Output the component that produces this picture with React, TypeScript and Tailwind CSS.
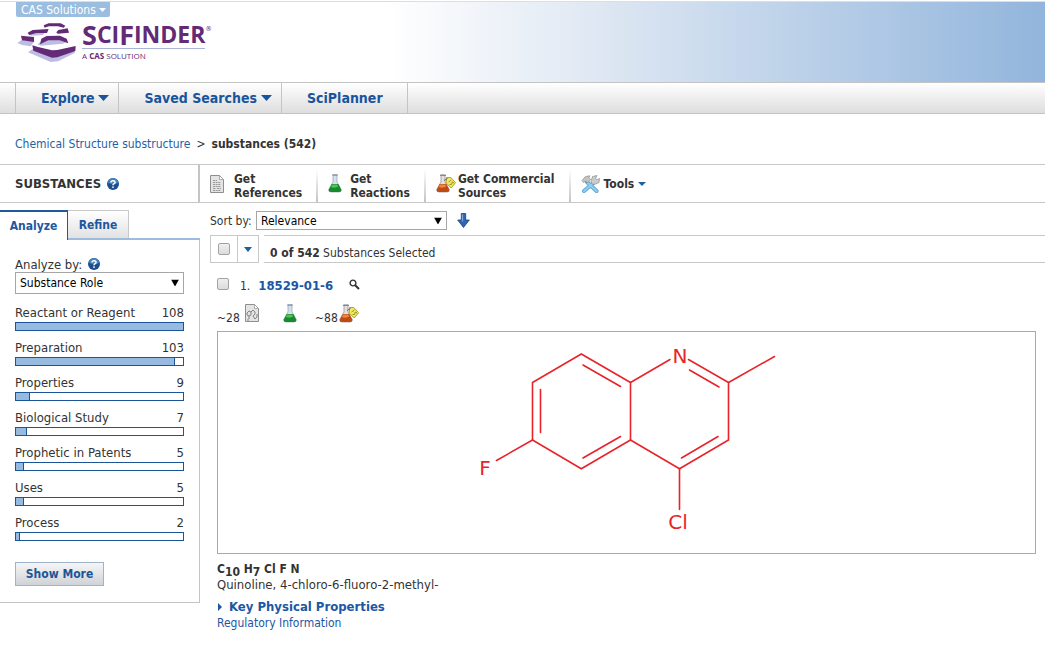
import { ReactNode } from 'react';

const roles = [
  { label: 'Reactant or Reagent', count: 108 },
  { label: 'Preparation', count: 103 },
  { label: 'Properties', count: 9 },
  { label: 'Biological Study', count: 7 },
  { label: 'Prophetic in Patents', count: 5 },
  { label: 'Uses', count: 5 },
  { label: 'Process', count: 2 },
];

const maxCount = 108;

function Caret({ className = '' }: { className?: string }) {
  return (
    <svg viewBox="0 0 10 6" preserveAspectRatio="none" className={`shrink-0 fill-current ${className}`} aria-hidden="true">
      <path d="M0 0h10L5 6z" />
    </svg>
  );
}

function Logo() {
  return (
    <svg viewBox="18 18 186 126" className="h-[42px] w-[62px] shrink-0" aria-hidden="true">
      <g fill="#bdbde4">
        <path d="M22 84l14-10 36 6-10 14-26-4zM52 56l10-6 44 2-8 8-34 2zM82 88l10-8 22-6h36l18 8-10 4-66 6zM54 112l14-10 58 22 68-18v8l-50 25-22 2z" />
      </g>
      <g fill="#632a76">
        <path d="M101 31l15-6h36l14 7-5 6-17-4h-28l-12 4z" />
        <path d="M53 53l15-8 48-3-5 12-32 0-21 6z" />
        <path d="M139 52l6-7 28-5 4 13-34 3z" />
        <path d="M33 62l39 4v15l-36-5z" />
        <path d="M90 88l4-17 16-8 40-1 20 9 5 14-26-9h-34z" />
        <path d="M67 91l17 5 42 10 16-1 55-12-1 15-54 19-16 1-56-21z" />
      </g>
    </svg>
  );
}

function HelpIcon() {
  return (
    <svg viewBox="0 0 12 12" className="size-3 shrink-0" aria-hidden="true">
      <circle cx="6" cy="6" r="6" fill="#1d4f8f" />
      <path d="M1 5a5 5 0 0 1 10 0Q6 7 1 5z" fill="#4a83bd" />
      <path d="M4 4.6Q4 2.7 6 2.7t2 1.7Q8 5.400 6.800 5.900 6 6.300 6 7.200" fill="none" stroke="#fff" strokeWidth="1.500" />
      <circle cx="6" cy="9.100" r=".9" fill="#fff" />
    </svg>
  );
}

function DocumentIcon({ structure = false }: { structure?: boolean }) {
  return (
    <svg viewBox="0 0 14 18" className="h-[18px] w-3.5 shrink-0" aria-hidden="true">
      <path d="M.5.5h9l4 4v13H.5z" fill="#e4e4e4" stroke="#8f8f8f" />
      <path d="M9.500.5v4h4z" fill="#fff" stroke="#999" strokeWidth=".8" />
      {structure ? (
        <g fill="none" stroke="#777" strokeWidth=".9">
          <path d="M2 9l2-2 2 1v3l-2 1-2-1zM6 8l2-2 2 2v2l-2 2M4 12v3M8 12l2 3 2-2v-3M2 16h2" />
        </g>
      ) : (
        <path d="M3 5.500h4M3 7.500h8M3 9.500h8M3 11.500h8M3 13.500h3M7 13.500h4M3 15.500h8" stroke="#9a9a9a" strokeDasharray="2 .6" />
      )}
    </svg>
  );
}

function FlaskIcon() {
  return (
    <svg viewBox="0 0 14 19" className="h-[19px] w-3.5 shrink-0" aria-hidden="true">
      <path d="M5 1v7L.8 15.500Q.3 18 3 18h8q2.700 0 2.200-2.500L9 8V1z" fill="#d5e2ec" stroke="#8ba1b3" strokeWidth=".7" />
      <path d="M4.200 1h5.600" stroke="#7d93a6" strokeWidth="1.300" />
      <path d="M3.700 10h6.600l2.900 5.500Q13.500 18 11 18H3Q.4 18 .8 15.500z" fill="#168a2c" />
      <path d="M4.200 10.500h5l1 2q-3 2-7.500.5z" fill="#4fc25d" />
    </svg>
  );
}

function SourceIcon() {
  return (
    <svg viewBox="0 0 20 19" className="h-[19px] w-5 shrink-0" aria-hidden="true">
      <path d="M5 1v7L.8 15.500Q.3 18 3 18h8q2.700 0 2.200-2.500L9 8V1z" fill="#e4e0e0" stroke="#8d8790" strokeWidth=".7" />
      <path d="M4 1.300h6" stroke="#7f8890" strokeWidth="1.300" />
      <path d="M3.700 10h6.600l2.900 5.500Q13.500 18 11 18H3Q.4 18 .8 15.500z" fill="#c14a12" />
      <path d="M4.200 10.500h5l1 2q-3 2-7.500.5z" fill="#ec8740" />
      <path d="M10.500 3.500l4.500.2 4.500 5-4.300 5.300-5-5z" fill="#f3ec62" stroke="#a39a20" strokeWidth=".9" />
      <path d="M12.500 8l3-2M13.500 10.500q3 .5 2.500-1.500t2 0" fill="none" stroke="#7d7620" strokeWidth=".8" />
      <path d="M8 6.500l3.500-2" stroke="#555" strokeWidth=".8" />
    </svg>
  );
}

function ToolsIcon() {
  return (
    <svg viewBox="0 0 19 18" className="h-[18px] w-[19px] shrink-0" aria-hidden="true">
      <path d="M6 7l9.500 9M12.500 8L3 16" stroke="#5aa9d8" strokeWidth="4" strokeLinecap="round" />
      <path d="M12.500 8L3 16M7 8l8.500 8" stroke="#8fd0f0" strokeWidth="2.200" strokeLinecap="round" />
      <path d="M1 5.500L4.500 1.500 9 .8 8 2.500l1.500 2L6.500 8 4.800 6 2.500 7.500z" fill="#c4c4c4" stroke="#8c8c8c" strokeWidth=".7" />
      <path d="M10 6.500L11.500 1.500l4.500-1-1.500 3 1.500 1.200 2.500-1.200-.5 4-3.500 1.500-3 .5z" fill="#cbcbcb" stroke="#8c8c8c" strokeWidth=".7" />
    </svg>
  );
}

function SortArrowIcon() {
  return (
    <svg viewBox="0 0 13 15" className="h-[15px] w-[13px]" aria-hidden="true">
      <path d="M4.300.5h4.400V7h3.600L6.500 14.500.7 7h3.600z" fill="#2f66b4" stroke="#173f80" strokeWidth=".8" />
      <path d="M5.500 1.500v7" stroke="#7fa8de" strokeWidth="1.200" />
    </svg>
  );
}

function SearchIcon() {
  return (
    <svg viewBox="0 0 11 11" className="size-[11px]" fill="none" stroke="#333" aria-hidden="true">
      <circle cx="4" cy="4" r="2.900" strokeWidth="1.400" />
      <path d="M6.200 6.200l3.800 3.800" strokeWidth="2" />
    </svg>
  );
}

/**
 * 4-chloro-6-fluoro-2-methylquinoline
 */
function Structure() {
  return (
    <svg viewBox="460 335 330 215" className="h-[215px] w-[330px]" role="img" aria-label="Quinoline, 4-chloro-6-fluoro-2-methyl-">
      <g fill="none" stroke="#e8242a" strokeWidth="1.600" strokeLinecap="round">
        <path d="M630.500 382.500L581.300 354l-48.800 28.500V440l48.800 28.700 49.200-28.700z" />
        <path d="M583 365l37.500 21.500M540.500 389.500v43M583 458l37.500-21.500" />
        <path d="M630.500 382.500l39.500-23M688.500 359.500l40 23V440l-49 28.700L630.500 440" />
        <path d="M689.500 370l29.500 17M718 436.500L681.500 458" />
        <path d="M728.500 382.500l46-26M679.500 468.700V509.500M532.500 440L496.500 460.500" />
      </g>
      <g fill="#e8242a" fontSize="20" textAnchor="middle" className="font-['DejaVu_Sans',sans-serif]">
        <text x="680" y="363">N</text>
        <text x="485" y="475">F</text>
        <text x="678" y="529">Cl</text>
      </g>
    </svg>
  );
}

function Select({ id, value, className = '' }: { id: string; value: string; className?: string }) {
  return (
    <div className={`relative ${className}`}>
      <select id={id} className="block h-full w-full appearance-none border border-[#a6a6a6] bg-white pl-1 text-xs text-black">
        <option>{value}</option>
      </select>
      <Caret className="pointer-events-none absolute top-1/2 right-[5px] h-[7px] w-2 -translate-y-1/2 text-black" />
    </div>
  );
}

function Checkbox({ label }: { label: string }) {
  return (
    <input
      type="checkbox"
      aria-label={label}
      className="size-3 shrink-0 appearance-none rounded-xs border border-[#a3a3a3] bg-linear-to-b from-[#efefef] to-[#dcdcdc]"
    />
  );
}

function NavItem({ children, caret = false }: { children: ReactNode; caret?: boolean }) {
  return (
    <button className={`flex h-full items-center gap-1 border-r border-[#c4c4c4] pl-[25px] ${caret ? 'pr-[9px]' : 'pr-6'}`}>
      {children}
      {caret && <Caret className="h-1.5 w-[11px]" />}
    </button>
  );
}

function ToolbarButton({ icon, children, className = '' }: { icon: ReactNode; children: ReactNode; className?: string }) {
  return (
    <button className={`flex items-center pl-2.5 text-left text-xs leading-[14px] font-bold ${className}`}>
      {icon}
      {children}
    </button>
  );
}

function Separator() {
  return <div className="mt-1 w-0.5 self-stretch bg-linear-to-b from-white to-[#c4c4c4]" />;
}

function Sidebar() {
  return (
    <aside className="w-[200px] shrink-0 pt-[7px]">
      <div className="flex h-[30px] text-xs font-bold text-[#1f57a0]" role="tablist">
        <button role="tab" aria-selected="true" className="w-[68px] border-t-2 border-r border-[#1f5a9d]">
          Analyze
        </button>
        <div className="flex grow border-b-2 border-[#9bbbdf]">
          <button role="tab" aria-selected="false" className="w-[61px] border-t border-r border-[#c8c8c8] bg-linear-to-b from-white to-[#e2e2e2]">
            Refine
          </button>
        </div>
      </div>
      <div className="border-r border-b border-[#c4c4c4] px-[15px] pt-4 pb-4">
        <div className="flex h-4 items-center gap-1.5 text-[13px]">
          <label htmlFor="analyze-by" className="pt-0.5">Analyze by:</label>
          <HelpIcon />
        </div>
        <Select id="analyze-by" value="Substance Role" className="h-[22px]" />
        <ul className="mt-[11px]">
          {roles.map((role) => (
            <li key={role.label} className="h-[35px] text-[13px] leading-4">
              <div className="flex justify-between">
                <span>{role.label}</span>
                <span>{role.count}</span>
              </div>
              <div className="mt-px h-[9px] border border-[#1c5597]">
                <div
                  className={`h-full bg-[#97bae0] ${role.count < maxCount ? 'border-r border-[#1c5597]' : ''}`}
                  style={{ width: `${Math.max((role.count / maxCount) * 100, 2.4)}%` }}
                />
              </div>
            </li>
          ))}
        </ul>
        <button className="mt-3 h-6 w-[89px] border border-[#9fb3cc] bg-linear-to-b from-[#f6f6f6] to-[#cfd2d7] text-xs font-bold text-[#1c5597]">
          Show More
        </button>
      </div>
    </aside>
  );
}

function Results() {
  return (
    <main className="min-w-0 grow pl-2.5">
      <div className="mt-2 flex h-[19px] items-center pr-2">
        <label htmlFor="sort-by" className="w-[46px] text-xs whitespace-nowrap">Sort by:</label>
        <Select id="sort-by" value="Relevance" className="h-[19px] w-[191px]" />
        <button aria-label="Sort direction" className="ml-2.5">
          <SortArrowIcon />
        </button>
      </div>

      <div className="mt-[5px] flex h-7 gap-[5px]">
        <div className="flex w-[49px] shrink-0 border border-[#c8c8c8]">
          <div className="flex w-[27px] items-center justify-center border-r border-[#c8c8c8]">
            <Checkbox label="Select all substances" />
          </div>
          <button aria-label="Selection options" className="flex grow items-center justify-center text-[#1c5fa5]">
            <Caret className="h-[5px] w-2" />
          </button>
        </div>
        <div className="flex grow items-center border-y border-[#c8c8c8] pt-2 pl-1.5 text-xs">
          <p>
            <b>0 of 542</b> Substances Selected
          </p>
        </div>
      </div>

      <article className="pr-[9px] pl-[7px]">
        <div className="mt-[11px] flex h-5 items-center">
          <Checkbox label="Select substance 1" />
          <span className="ml-[11px] pt-1 text-xs">1.</span>
          <a href="#substance" className="ml-2 pt-1 text-[13px] font-bold text-[#1c57a3]">18529-01-6</a>
          <button aria-label="View details" className="ml-4">
            <SearchIcon />
          </button>
        </div>

        <div className="mt-[9px] flex h-5 items-center text-xs">
          <span className="w-7 pt-2.5">~28</span>
          <DocumentIcon structure />
          <div className="ml-6">
            <FlaskIcon />
          </div>
          <span className="ml-[18px] w-6 pt-2.5">~88</span>
          <SourceIcon />
        </div>

        <div className="mt-2 flex h-[223px] items-center justify-center border border-[#a9a9a9] pr-1">
          <Structure />
        </div>

        <div className="mt-[7px] text-[13px] leading-4">
          <p className="h-4 text-xs leading-4 font-bold">
            C<sub className="text-xs">10</sub> H<sub className="text-xs">7</sub> Cl F N
          </p>
          <p>Quinoline, 4-chloro-6-fluoro-2-methyl-</p>
          <button className="mt-1.5 flex items-center gap-[7px] font-bold text-[#1c57a3]">
            <svg viewBox="0 0 5 8" className="h-2 w-[5px] fill-current" aria-hidden="true">
              <path d="M1 0l4 4-4 4z" />
            </svg>
            Key Physical Properties
          </button>
          <a href="#regulatory" className="block text-xs leading-4 text-[#1c57a3]">Regulatory Information</a>
        </div>
      </article>
    </main>
  );
}

export default function App() {
  return (
    <div className="bg-white pb-5 font-['DejaVu_Sans_Condensed','DejaVu_Sans',sans-serif] text-[#333]">
      <header className="mt-px h-[81px] border-t border-[#dcdfe2] bg-linear-to-r from-white from-37% via-[#dfe8f3] via-57% to-[#92b5dc] pl-4">
        <button className="flex h-[15px] items-center gap-[3px] rounded-b-xs bg-[#9abde0] pr-1 pl-[5px] text-xs leading-none text-white">
          CAS Solutions
          <Caret className="h-1 w-[7px]" />
        </button>
        <a href="#home" className="mt-1 flex w-fit gap-1 text-[#632a76]">
          <Logo />
          <div className="font-['Open_Sans',sans-serif]">
            <div className="flex h-7 items-center border-b border-[#a9b4d6] text-[23px] leading-none font-bold">
              <span className="text-[27px]">S</span>CI<span className="text-[27px]">F</span>INDER
            </div>
            <div className="mt-0.5 text-[8px] leading-[10px]">
              A <b>CAS</b> SOLUTION
            </div>
          </div>
          <span className="-ml-1 text-[7px] leading-4">®</span>
        </a>
      </header>

      <nav className="flex h-8 items-stretch border-y border-[#c4c4c4] bg-linear-to-b from-white to-[#dedede] text-sm font-bold text-[#1a549c]">
        <div className="w-4 border-r border-[#c4c4c4]" />
        <NavItem caret>Explore</NavItem>
        <NavItem caret>Saved Searches</NavItem>
        <NavItem>SciPlanner</NavItem>
      </nav>

      <div className="flex h-[50px] items-center gap-1.5 px-[15px] pt-2.5 text-xs">
        <a href="#structure" className="text-[#1f5fa8]">Chemical Structure substructure</a>
        <span>&gt;</span>
        <b>substances (542)</b>
      </div>

      <div className="flex h-[39px] border-y border-[#c8c8c8]">
        <h1 className="flex w-[200px] shrink-0 items-center gap-1.5 border-r-2 border-[#c4c4c4] pl-[15px] text-[13px] font-bold">
          SUBSTANCES
          <HelpIcon />
        </h1>
        <ToolbarButton icon={<DocumentIcon />} className="gap-2.5 pr-3.5">
          <span className="pt-1">Get<br />References</span>
        </ToolbarButton>
        <Separator />
        <ToolbarButton icon={<FlaskIcon />} className="gap-2 pr-3.5">
          <span className="pt-1">Get<br />Reactions</span>
        </ToolbarButton>
        <Separator />
        <ToolbarButton icon={<SourceIcon />} className="gap-0.5 pr-3.5">
          <span className="pt-1">Get Commercial<br />Sources</span>
        </ToolbarButton>
        <Separator />
        <ToolbarButton icon={<ToolsIcon />} className="gap-1">
          Tools
          <Caret className="h-1 w-2 text-[#1c5fa5]" />
        </ToolbarButton>
      </div>

      <div className="flex items-start">
        <Sidebar />
        <Results />
      </div>
    </div>
  );
}
